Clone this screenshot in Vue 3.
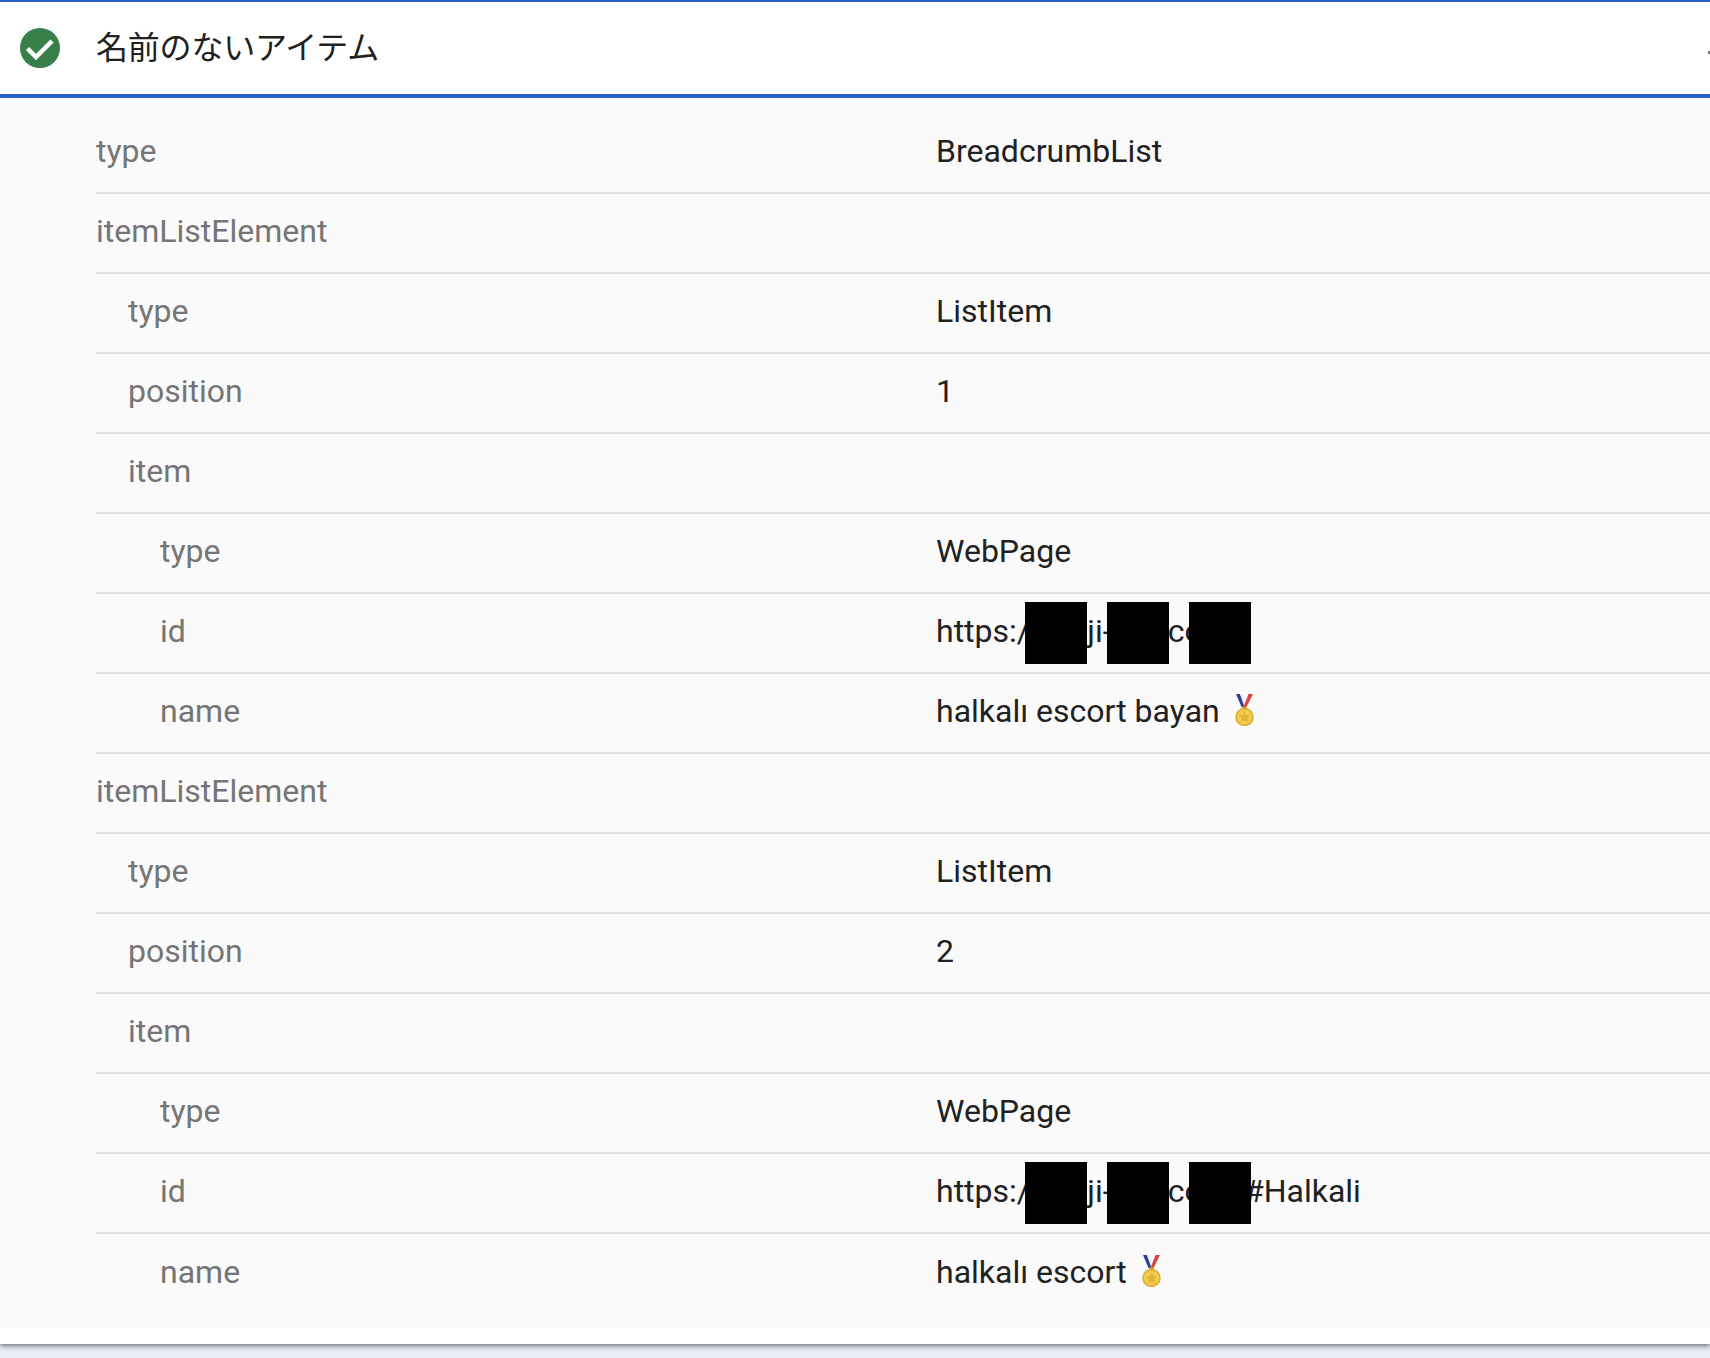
<template>
  <div class="page">
    <section class="card">
      <header class="card-head">
        <svg class="status-icon" viewBox="0 0 40 40">
          <circle cx="20" cy="20" r="20" fill="#38804a" />
          <path d="M7.500 20.500l8.500 8.500L32 13" fill="none" stroke="#fff" stroke-width="4.500" />
        </svg>
        <span class="card-title">名前のないアイテム</span>
        <span class="expand-edge"></span>
      </header>
      <div class="rows">
        <div v-for="(row, i) in rows" :key="i" class="row">
          <div class="row-label" :style="{ paddingLeft: row.level * 32 + 'px' }">{{ row.label }}</div>
          <div class="row-value">
            <span v-if="row.value">{{ row.value }}</span>
            <svg v-if="row.medal" class="medal" viewBox="0 0 19 32">
              <path d="M1 0h4l4.500 13H6.500z" fill="#2c3f9e" />
              <path d="M5 0h3.500l2 5.500L9.500 11z" fill="#f2f3f6" />
              <path d="M18 0h-4.500L8.500 13h3z" fill="#e0413a" />
              <rect x="7.500" y="12" width="4" height="3" rx="1" fill="#b98a1e" />
              <circle cx="9.500" cy="23" r="8.500" fill="#f3cb4c" stroke="#dcaa2c" stroke-width="1.500" />
              <path d="M9.500 17.500l1.600 3.500 3.800.5-2.800 2.600.7 3.800-3.300-1.900-3.300 1.900.7-3.800-2.800-2.600 3.800-.5z" fill="#e0b233" />
            </svg>
            <template v-if="row.redacted">
              <i class="redact r1"></i>
              <i class="redact r2"></i>
              <i class="redact r3"></i>
            </template>
          </div>
        </div>
      </div>
      <div class="card-foot"></div>
    </section>
  </div>
</template>

<script setup>
function listItem(position, url, name) {
  return [
    { label: 'itemListElement', level: 0 },
    { label: 'type', level: 1, value: 'ListItem' },
    { label: 'position', level: 1, value: position },
    { label: 'item', level: 1 },
    { label: 'type', level: 2, value: 'WebPage' },
    { label: 'id', level: 2, value: url, redacted: true },
    { label: 'name', level: 2, value: name, medal: true },
  ]
}

// the hidden part of the url sits under the black boxes
const rows = [
  { label: 'type', level: 0, value: 'BreadcrumbList' },
  ...listItem('1', 'https://xxxji-xxx.com/', 'halkalı escort bayan'),
  ...listItem('2', 'https://xxxji-xxx.com/#Halkali', 'halkalı escort'),
]
</script>

<style>
html, body { background: #e9edf5; }
</style>

<style scoped>
.page {
  height: 1358px;
  overflow: hidden;
  font-family: Roboto, "Noto Sans CJK JP", sans-serif;
}

.card {
  background: #fff;
  box-shadow: 0 2px 5px rgba(60, 64, 67, .7);
}

.card-head {
  display: flex;
  align-items: center;
  box-sizing: border-box;
  height: 98px;
  border-top: 2px solid #2561c8;
  border-bottom: 4px solid #2561c8;
  padding-left: 20px;
  position: relative;
  overflow: hidden;
}

.status-icon { width: 40px; height: 40px; flex: none; }

.card-title {
  margin-left: 36px;
  margin-bottom: 6px;
  font-size: 32px;
  letter-spacing: -0.2px;
  color: #212121;
}

.expand-edge {
  position: absolute;
  right: -2px;
  top: 49px;
  width: 4px;
  height: 3px;
  background: #777;
}

.rows {
  background: #fafafa;
  padding: 16px 0 14px 96px;
}

.row {
  display: grid;
  grid-template-columns: 840px 1fr;
  align-items: center;
  height: 80px;
  padding-bottom: 4px;
  border-bottom: 2px solid #e0e0e0;
  font-size: 32px;
  box-sizing: border-box;
}
.row:last-child { border-bottom: none; }

.row-label { color: #757575; }

.row-value {
  color: #212121;
  position: relative;
  display: flex;
  align-items: center;
  gap: 15px;
  height: 100%;
}

.medal { width: 19px; height: 32px; flex: none; margin-top: -3px; }

.redact {
  position: absolute;
  top: 8px;
  width: 62px;
  height: 62px;
  background: #000;
}
.r1 { left: 89px; }
.r2 { left: 171px; }
.r3 { left: 253px; }

.card-foot { height: 16px; }
</style>
